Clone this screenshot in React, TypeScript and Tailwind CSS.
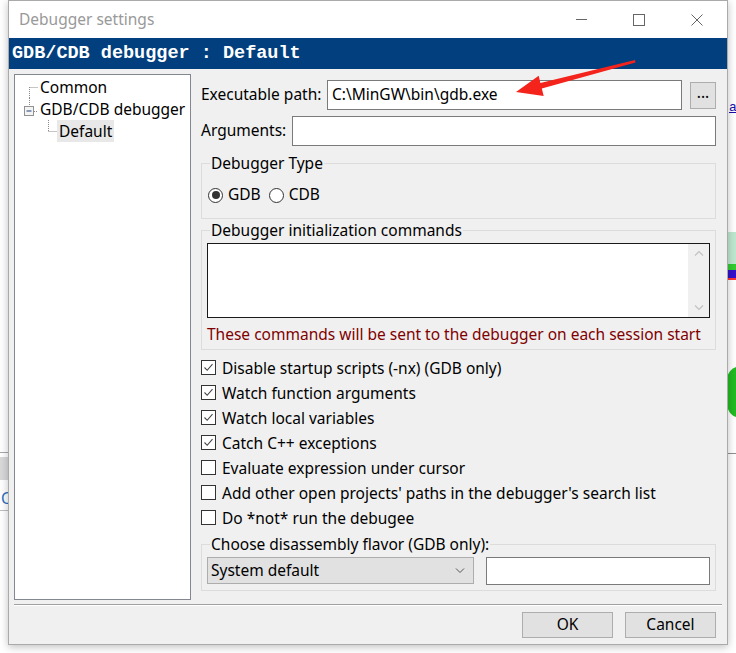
import React from "react";

const ui = { fontFamily: '"Noto Sans", "Open Sans", sans-serif' };

function CheckRow({ label, checked }: { label: string; checked?: boolean }) {
  return (
    <div className="h-[25px] flex items-center">
      <span className="w-[15px] h-[15px] border border-[#333] bg-white flex items-center justify-center shrink-0">
        {checked && (
          <svg width="11" height="11" viewBox="0 0 11 11">
            <path d="M1.5 5.5 L4.2 8.3 L9.5 2.2" fill="none" stroke="#444" strokeWidth="1.1" />
          </svg>
        )}
      </span>
      <span className="ml-[6px] leading-[20px]">{label}</span>
    </div>
  );
}

function Radio({ label, on }: { label: string; on?: boolean }) {
  return (
    <span className="flex items-center gap-[5px]">
      <span className="w-[15px] h-[15px] rounded-full border border-[#333] bg-white flex items-center justify-center">
        {on && <span className="w-[8px] h-[8px] rounded-full bg-[#333]" />}
      </span>
      <span>{label}</span>
    </span>
  );
}

export default function App() {
  return (
    <div className="relative w-[736px] h-[653px] bg-white overflow-hidden text-[15.5px] text-black" style={ui}>
      {/* desktop bits behind the dialog */}
      <div className="absolute left-[0px] top-[452px] w-[10px] h-px bg-[#a8a8a8]" />
      <div className="absolute left-[0px] top-[457px] w-[10px] h-[23px] bg-[#d9d9d9]" />
      <div className="absolute left-[1px] top-[488px] text-[#2a6ebd] leading-[20px]">C</div>
      <div className="absolute left-[0px] top-[510px] w-[10px] h-px bg-[#bdbdbd]" />
      <div className="absolute left-[729px] top-[100px] text-[13px] text-[#1a0dab] underline leading-[16px]" style={{ fontFamily: '"Liberation Mono", monospace' }}>a</div>
      <div className="absolute left-[728px] top-[232px] w-[8px] h-[33px] bg-[#bfe8d0]" />
      <div className="absolute left-[728px] top-[264px] w-[8px] h-[6px] bg-[#33cc33]" />
      <div className="absolute left-[728px] top-[270px] w-[8px] h-[8px] bg-[#3311cc]" />
      <div className="absolute left-[728px] top-[278px] w-[8px] h-[2px] bg-[#ff3333]" />
      <div className="absolute left-[727px] top-[366px] w-[14px] h-[52px] rounded-l-full bg-[#22bb22]" />
      <div className="absolute left-[727px] top-[453px] w-[10px] h-px bg-[#909090]" />

      {/* dialog window */}
      <div className="absolute left-[8px] top-0 w-[720px] h-[645px] border border-[#aaaaaa] flex flex-col shadow-[0_2px_8px_rgba(0,0,0,0.25)]">
        <div className="h-[37px] bg-white flex items-center shrink-0">
          <span className="ml-[10px] text-[#999999]">Debugger settings</span>
          <div className="ml-auto flex items-center h-full">
            <span className="w-[58px] flex justify-center">
              <span className="w-[11px] h-px bg-[#666]" />
            </span>
            <span className="w-[58px] flex justify-center">
              <span className="w-[12px] h-[12px] border border-[#666]" />
            </span>
            <span className="w-[58px] flex justify-center mr-[1px]">
              <svg width="12" height="12" viewBox="0 0 12 12">
                <path d="M0.5 0.5 L11.5 11.5 M11.5 0.5 L0.5 11.5" stroke="#666" strokeWidth="1" />
              </svg>
            </span>
          </div>
        </div>

        <div className="h-[31px] bg-[#013f7e] flex items-center shrink-0">
          <span
            className="ml-[3px] text-white font-bold text-[18.5px] leading-[24px]"
            style={{ fontFamily: '"Liberation Mono", monospace' }}
          >
            GDB/CDB debugger : Default
          </span>
        </div>

        <div className="flex-1 bg-[#f0f0f0] flex flex-col">
          <div className="flex pt-[5px] pl-[5px] pr-[11px]">
            {/* tree */}
            <div className="w-[177px] h-[526px] border border-[#828790] bg-white pt-[1px] shrink-0">
              <div className="h-[22px] flex items-center">
                <svg width="25" height="22" className="shrink-0">
                  <path d="M14.5 11 V22 M14.5 11.5 H23" stroke="#8a8a8a" strokeDasharray="1 1" />
                </svg>
                <span className="leading-[20px]">Common</span>
              </div>
              <div className="h-[22px] flex items-center">
                <svg width="25" height="22" className="shrink-0">
                  <path d="M14.5 0 V8" stroke="#8a8a8a" strokeDasharray="1 1" />
                  <rect x="9.5" y="8.5" width="9" height="9" fill="#f4f4f4" stroke="#919191" />
                  <path d="M11.5 13 H16.5" stroke="#1c3f7a" />
                  <path d="M19 13.5 H23" stroke="#8a8a8a" strokeDasharray="1 1" />
                </svg>
                <span className="leading-[20px]">GDB/CDB debugger</span>
              </div>
              <div className="h-[22px] flex items-center">
                <svg width="42" height="22" className="shrink-0">
                  <path d="M33.5 0 V11 M33.5 11.5 H42" stroke="#8a8a8a" strokeDasharray="1 1" />
                </svg>
                <span className="leading-[22px] px-[2px] bg-[#e8e8e8]">Default</span>
              </div>
            </div>

            {/* settings */}
            <div className="flex-1 ml-[10px] pt-[6px] flex flex-col">
              <div className="flex items-center h-[30px]">
                <span className="w-[126px]">Executable path:</span>
                <div className="flex-1 h-[30px] border border-[#7a7a7a] bg-white flex items-center px-[4px]">
                  C:\MinGW\bin\gdb.exe
                </div>
                <div className="ml-[8px] w-[26px] h-[27px] border border-[#adadad] bg-[#e1e1e1] flex items-center justify-center leading-none pb-[4px]">
                  ...
                </div>
              </div>

              <div className="flex items-center h-[30px] mt-[6px]">
                <span className="w-[91px]">Arguments:</span>
                <div className="flex-1 h-[30px] border border-[#7a7a7a] bg-white" />
              </div>

              <fieldset className="mt-[7px] h-[66px] border border-[#dcdcdc] px-[5px]">
                <legend className="ml-[3px] leading-[20px] px-[1px]">Debugger Type</legend>
                <div className="mt-[12px] ml-[1px] flex items-center gap-[8px] h-[20px]">
                  <Radio label="GDB" on />
                  <Radio label="CDB" />
                </div>
              </fieldset>

              <fieldset className="mt-[1px] h-[130px] border border-[#dcdcdc] px-[5px]">
                <legend className="ml-[3px] leading-[20px] px-[1px]">Debugger initialization commands</legend>
                <div className="mt-[3px] h-[75px] border border-[#1a1a1a] bg-white flex justify-end">
                  <div className="w-[21px] h-full bg-[#f0f0f0] flex flex-col items-center justify-between py-[6px]">
                    <svg width="10" height="6" viewBox="0 0 10 6">
                      <path d="M1 5.5 L5 1.5 L9 5.5" fill="none" stroke="#c2c2c2" strokeWidth="1.2" />
                    </svg>
                    <svg width="10" height="6" viewBox="0 0 10 6">
                      <path d="M1 0.5 L5 4.5 L9 0.5" fill="none" stroke="#c2c2c2" strokeWidth="1.2" />
                    </svg>
                  </div>
                </div>
                <div className="mt-[6px] leading-[20px] text-[#800000] whitespace-nowrap">
                  These commands will be sent to the debugger on each session start
                </div>
              </fieldset>

              <div className="mt-[5px] flex flex-col">
                <CheckRow label="Disable startup scripts (-nx) (GDB only)" checked />
                <CheckRow label="Watch function arguments" checked />
                <CheckRow label="Watch local variables" checked />
                <CheckRow label="Catch C++ exceptions" checked />
                <CheckRow label="Evaluate expression under cursor" />
                <CheckRow label="Add other open projects' paths in the debugger's search list" />
                <CheckRow label="Do *not* run the debugee" />
              </div>

              <fieldset className="mt-[4px] h-[57px] border border-[#dcdcdc] px-[5px]">
                <legend className="ml-[3px] leading-[20px] px-[1px]">Choose disassembly flavor (GDB only):</legend>
                <div className="mt-[3px] flex items-start">
                  <div className="w-[267px] h-[27px] border border-[#adadad] bg-[#e1e1e1] flex items-center pl-[3px] pr-[8px]">
                    <span>System default</span>
                    <svg width="10" height="6" viewBox="0 0 10 6" className="ml-auto">
                      <path d="M1 0.5 L5 4.5 L9 0.5" fill="none" stroke="#555" strokeWidth="1" />
                    </svg>
                  </div>
                  <div className="ml-[12px] flex-1 h-[28px] border border-[#7a7a7a] bg-white" />
                </div>
              </fieldset>
            </div>
          </div>

          <div className="mt-[4px] ml-[5px] mr-[5px] h-px bg-[#a0a0a0] border-b border-white box-content" />

          <div className="mt-[6px] flex justify-end gap-[12px] pr-[11px]">
            <div className="w-[91px] h-[26px] border border-[#adadad] bg-[#e1e1e1] flex items-center justify-center">OK</div>
            <div className="w-[91px] h-[26px] border border-[#adadad] bg-[#e1e1e1] flex items-center justify-center">Cancel</div>
          </div>
        </div>
      </div>

      {/* red annotation arrow */}
      <svg className="absolute left-0 top-0 pointer-events-none" width="736" height="653">
        <polygon
          points="516,92 538.7,75.7 540.4,83 635,60 635.5,62.5 541.8,88.5 543.7,96"
          fill="#f4231b"
        />
      </svg>
    </div>
  );
}
